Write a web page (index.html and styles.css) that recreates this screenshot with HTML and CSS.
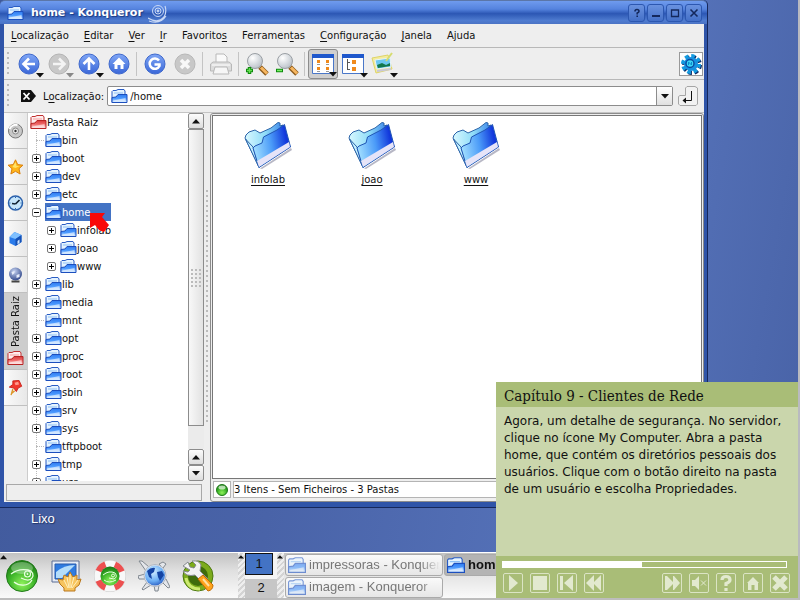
FILE: index.html
```html
<!DOCTYPE html>
<html lang="pt-BR">
<head>
    <meta charset="UTF-8" />
    <meta name="viewport" content="width=device-width, initial-scale=1.0" />
    <title>home - Konqueror</title>
    <link rel="stylesheet" href="styles.css">
</head>
<body>
    <!-- shared icons -->
    <svg class="defs" width="0" height="0" aria-hidden="true">
        <defs>
            <linearGradient id="gFolder" x1="0" y1="0" x2="0" y2="1"><stop offset="0" stop-color="#2f7bf0"/><stop offset="0.5" stop-color="#4d9bff"/><stop offset="1" stop-color="#e6f4ff"/></linearGradient>
            <linearGradient id="gRed" x1="0" y1="0" x2="0" y2="1"><stop offset="0" stop-color="#d83a3a"/><stop offset="0.5" stop-color="#f07070"/><stop offset="1" stop-color="#fff0f0"/></linearGradient>
            <linearGradient id="gBall" x1="0" y1="0" x2="0" y2="1"><stop offset="0" stop-color="#7fa6f5"/><stop offset="1" stop-color="#3a67d8"/></linearGradient>
            <linearGradient id="gBig" x1="0" y1="0.6" x2="1" y2="0.4"><stop offset="0" stop-color="#a5e2ff"/><stop offset="0.5" stop-color="#4b9bf8"/><stop offset="0.9" stop-color="#1238dc"/></linearGradient>
            <linearGradient id="gTab" x1="0" y1="0" x2="1" y2="0"><stop offset="0" stop-color="#d8f8ff"/><stop offset="0.5" stop-color="#8fdcf8"/><stop offset="1" stop-color="#2b74e8"/></linearGradient>
            <radialGradient id="gGreen" cx="0.5" cy="0.75" r="0.7"><stop offset="0" stop-color="#8df05a"/><stop offset="0.6" stop-color="#3cb428"/><stop offset="1" stop-color="#1d7d16"/></radialGradient>
            <radialGradient id="gGlass" cx="0.35" cy="0.3" r="0.8"><stop offset="0" stop-color="#ffffff"/><stop offset="1" stop-color="#b4bcc4"/></radialGradient>
            <radialGradient id="gGlobe" cx="0.4" cy="0.3" r="0.8"><stop offset="0" stop-color="#d5efff"/><stop offset="0.6" stop-color="#6aaef5"/><stop offset="1" stop-color="#1f4fb8"/></radialGradient>
            <radialGradient id="gDark" cx="0.4" cy="0.3" r="0.8"><stop offset="0" stop-color="#c5d2f0"/><stop offset="1" stop-color="#223a80"/></radialGradient>
        </defs>
        <symbol id="folder" viewBox="0 0 16 16">
            <path d="M.5 14.5V3.500L1.500 2.500H4.500L6.500 1.500H12.500L13.500 3V7" fill="#e4f3ff" stroke="#2a5dc4"/>
            <path d="M.5 14.5V9.500L4.500 9L6.500 6.500H15.500V14.500Z" fill="url(#gFolder)" stroke="#1c4fbe"/>
            <path d="M2.500 5H11.500" stroke="#8fc0f5" fill="none"/>
            <path d="M2 12.500L14 10V13.500H2Z" fill="#fff" opacity=".55"/>
        </symbol>
        <symbol id="folder-red" viewBox="0 0 16 16">
            <path d="M.5 14.5V3.500L1.500 2.500H4.500L6.500 1.500H12.500L13.500 3V7" fill="#ffecec" stroke="#c03030"/>
            <path d="M.5 14.5V9.500L4.500 9L6.500 6.500H15.500V14.500Z" fill="url(#gRed)" stroke="#b82424"/>
            <path d="M2.500 5H11.500" stroke="#f3a0a0" fill="none"/>
            <path d="M2 12.500L14 10V13.500H2Z" fill="#fff" opacity=".5"/>
        </symbol>
        <symbol id="folder-big" viewBox="0 0 48 48">
            <path d="M16 47.500L47 27L48 29L18 48Z" fill="#70708c" opacity=".5"/>
            <path d="M1 17L2 14L5 11L11 9L16 12L27 7L34 1.500L36 2V5L39 4L42 24L15 46Z" fill="url(#gTab)" stroke="#2b63a8"/>
            <path d="M1.500 18L15 46.500L9 26Z" fill="#c4f0ff" stroke="#2b63a8"/>
            <path d="M40.500 3.500L46.500 26L15 46.500L9 27L11 25L18 22L19.500 16L33 9Z" fill="url(#gBig)" stroke="#1f55b4"/>
            <path d="M13 40L45 21L46 26L15 46Z" fill="#e6e4f8"/>
        </symbol>
        <symbol id="down" viewBox="0 0 8 5"><path d="M0 0H8L4 4.500Z" fill="currentColor"/></symbol>
        <symbol id="up" viewBox="0 0 8 5"><path d="M0 4.500H8L4 0Z" fill="currentColor"/></symbol>
        <symbol id="gecko" viewBox="0 0 32 32">
            <circle cx="16" cy="16" r="15.500" fill="url(#gGreen)" stroke="#237a1c"/>
            <ellipse cx="16" cy="8" rx="11" ry="6" fill="#fff" opacity=".3"/>
            <path d="M5 14C10 10 17 9 22 10C27 11 28 15 26 18C24 21 19 20 15 18M8 22C13 26 22 27 26 20" fill="none" stroke="#e8ffe0" stroke-width="1.300"/>
            <circle cx="21.500" cy="14" r="3" fill="none" stroke="#e8ffe0" stroke-width="1.200"/>
            <circle cx="21.500" cy="14" r="1" fill="#e8ffe0"/>
        </symbol>
    </svg>

    <main class="desktop">
        <section class="window">
            <header class="titlebar">
                <svg class="ico16"><use href="#folder"/></svg>
                <h1>home - Konqueror</h1>
                <svg class="swirl" viewBox="0 0 20 22" fill="none" stroke="#c9d8f5">
                    <circle cx="10" cy="9" r="5.500"/><circle cx="10" cy="9" r="3"/><circle cx="10" cy="9" r="1" fill="#c9d8f5"/>
                    <path d="M0 16Q10 22 16 15Q19 10 17 4M1 19Q12 23 18 14" stroke-width="1.200"/>
                </svg>
                <div class="winButtons">
                    <button aria-label="Ajuda da janela"><svg viewBox="0 0 10 10"><path d="M3 3.500Q3 1.500 5 1.500T7 3.300Q7 4.300 5.200 5V6.500M5.200 7.500V9" stroke-width="1.600"/></svg></button>
                    <button aria-label="Minimizar"><svg viewBox="0 0 10 10"><path d="M1 8H9" stroke-width="2"/></svg></button>
                    <button aria-label="Maximizar"><svg viewBox="0 0 10 10"><path d="M1.500 2H8.500V8.500H1.500Z" stroke-width="1.300"/></svg></button>
                    <button aria-label="Fechar"><svg viewBox="0 0 10 10"><path d="M1.500 1.500L8.500 8.500M8.500 1.500L1.500 8.500" stroke-width="1.600"/></svg></button>
                </div>
            </header>

            <nav class="menubar">
                <button><u>L</u>ocalização</button>
                <button><u>E</u>ditar</button>
                <button><u>V</u>er</button>
                <button><u>I</u>r</button>
                <button>Favorito<u>s</u></button>
                <button>Ferramen<u>t</u>as</button>
                <button><u>C</u>onfiguração</button>
                <button><u>J</u>anela</button>
                <button>Ajuda</button>
            </nav>

            <div class="toolbar">
                <span class="handle"></span>
                <button aria-label="Voltar"><svg class="ico22" viewBox="0 0 22 22"><circle cx="11" cy="11" r="10" fill="url(#gBall)" stroke="#3f69cc"/><path d="M17 11H6M11 5.500L5.500 11L11 16.500" fill="none" stroke="#fff" stroke-width="2.600"/></svg><svg class="arrow"><use href="#down"/></svg></button>
                <button class="off" aria-label="Avançar"><svg class="ico22" viewBox="0 0 22 22"><circle cx="11" cy="11" r="10" fill="#c8c8c8" stroke="#b4b4b4"/><path d="M5 11H16M11 5.500L16.500 11L11 16.500" fill="none" stroke="#f4f4f4" stroke-width="2.600"/></svg><svg class="arrow"><use href="#down"/></svg></button>
                <button aria-label="Subir"><svg class="ico22" viewBox="0 0 22 22"><circle cx="11" cy="11" r="10" fill="url(#gBall)" stroke="#3f69cc"/><path d="M11 17V6M5.500 11L11 5.500L16.500 11" fill="none" stroke="#fff" stroke-width="2.600"/></svg><svg class="arrow"><use href="#down"/></svg></button>
                <button aria-label="Pasta pessoal"><svg class="ico22" viewBox="0 0 22 22"><circle cx="11" cy="11" r="10" fill="url(#gBall)" stroke="#3f69cc"/><path d="M11 4.500L17.500 11H15.500V16H12.500V12H9.500V16H6.500V11H4.500Z" fill="#fff"/></svg></button>
                <span class="sep"></span>
                <button aria-label="Recarregar"><svg class="ico22" viewBox="0 0 22 22"><circle cx="11" cy="11" r="10" fill="url(#gBall)" stroke="#3f69cc"/><path d="M15 7.500A5.200 5.200 0 1 0 15.500 13V11.500H10.500" fill="none" stroke="#fff" stroke-width="2.500"/></svg></button>
                <button class="off" aria-label="Parar"><svg class="ico22" viewBox="0 0 22 22"><circle cx="11" cy="11" r="10" fill="#c8c8c8" stroke="#b8b8b8"/><path d="M7 7L15 15M15 7L7 15" stroke="#f8f8f8" stroke-width="3.500"/></svg></button>
                <span class="sep"></span>
                <button class="off" aria-label="Imprimir"><svg class="ico24" viewBox="0 0 24 24" stroke="#b8b8b8"><path d="M7 11V2H15L18 5V11" fill="#fafafa"/><path d="M1.500 12L4 10H20L22.500 12V19H1.500Z" fill="#dcdcdc"/><path d="M6 15H18L20 22H4Z" fill="#f6f6f6"/><path d="M3 13H21" stroke="#fff"/></svg></button>
                <span class="sep"></span>
                <button aria-label="Ampliar"><svg class="ico24" viewBox="0 0 24 24"><path d="M15 15L22 22" stroke="#8c5a1c" stroke-width="5"/><path d="M16 15.500L22 21.500" stroke="#f6b660" stroke-width="3"/><circle cx="10" cy="9" r="7.500" fill="url(#gGlass)" stroke="#9a9fa4"/><path d="M4.500 15V22M1 18.500H8" stroke="#0c8a0c" stroke-width="3.500"/><path d="M4.500 16V21M2 18.500H7" stroke="#66e052" stroke-width="1.500"/></svg></button>
                <button aria-label="Reduzir"><svg class="ico24" viewBox="0 0 24 24"><path d="M15 15L22 22" stroke="#8c5a1c" stroke-width="5"/><path d="M16 15.500L22 21.500" stroke="#f6b660" stroke-width="3"/><circle cx="10" cy="9" r="7.500" fill="url(#gGlass)" stroke="#9a9fa4"/><path d="M1 18.500H8" stroke="#0c8a0c" stroke-width="3.500"/><path d="M2 18.500H7" stroke="#7cf068" stroke-width="1.500"/></svg></button>
                <span class="sep"></span>
                <button class="pressed" aria-label="Ver como ícones"><svg class="ico22" viewBox="0 0 22 22"><path d="M.5 1.500H21.500V20.500H.5Z" fill="#fff" stroke="#4a77c8"/><path d="M0 1H22V5H0Z" fill="#1f58cc"/><path d="M5 7H8V10H5ZM14 7H17V10H14ZM5 14H8V17H5ZM14 14H17V17H14Z" fill="#f08a1c"/><path d="M5 11.500H8M14 11.500H17M5 18.500H8M14 18.500H17" stroke="#999"/></svg><svg class="arrow"><use href="#down"/></svg></button>
                <button aria-label="Ver em árvore"><svg class="ico22" viewBox="0 0 22 22"><path d="M.5 1.500H21.500V20.500H.5Z" fill="#fff" stroke="#4a77c8"/><path d="M0 1H22V5H0Z" fill="#1f58cc"/><path d="M10 7H14V11H10ZM10 14H14V18H10Z" fill="#f08a1c"/><path d="M5.500 6V17M5.500 9.500H8M5.500 16.500H8" stroke="#555" fill="none"/></svg><svg class="arrow"><use href="#down"/></svg></button>
                <button aria-label="Ver imagens"><svg class="ico24" viewBox="0 0 24 24"><path d="M1 6L17 3L21 17L5 21Z" fill="#f4ec9c" stroke="#ded468"/><path d="M4 8L19 6L20 15L6 17Z" fill="#6cc8f0" stroke="#e8f4fa"/><path d="M6 13L11 11L15 13L19 11V14L7 16Z" fill="#13784c"/><path d="M6 19L20 17" stroke="#c8c8d8" stroke-width="2"/><path d="M15 9L21 1" stroke="#d6dc70" stroke-width="2"/></svg><svg class="arrow"><use href="#down"/></svg></button>
                <span class="gear"><svg class="ico22" viewBox="0 0 22 22"><circle cx="12" cy="12" r="8" fill="none" stroke="#0b2a66" stroke-width="4" stroke-dasharray="3.600 2.680"/><circle cx="11" cy="11" r="8" fill="none" stroke="#149be0" stroke-width="4" stroke-dasharray="3.600 2.680"/><circle cx="11" cy="11" r="7" fill="#1590e0"/><circle cx="10" cy="10.500" r="4" fill="#3bd6f5" stroke="#0a4aa0" stroke-width="1.500"/><path d="M8.500 12V9L11.500 12V9" stroke="#0a8ad0" fill="none"/></svg></span>
            </div>

            <form class="location">
                <span class="handle"></span>
                <button class="clear" type="reset" aria-label="Limpar"><svg viewBox="0 0 15 12"><path d="M0 0H10L15 6L10 12H0Z" fill="#111"/><path d="M2.500 3L8.500 9.500M8.500 3L2.500 9.500" stroke="#fff" stroke-width="1.800"/></svg></button>
                <label for="url">L<u>o</u>calização:</label>
                <div class="combo">
                    <svg class="ico16"><use href="#folder"/></svg>
                    <input type="text" id="url" value="/home">
                    <button type="button" aria-label="Histórico"><svg class="tri"><use href="#down"/></svg></button>
                </div>
                <button class="go" type="button" aria-label="Ir"><svg viewBox="0 0 20 20"><path d="M.5 18V10.500L2 9.500H7.500V2L9 .5H17L19.500 2V18L18 19.500H2Z" fill="#f2f2f2" stroke="#a6a6a6"/><path d="M13.500 5V14.500H6" fill="none" stroke="#111"/><path d="M8 11.500V17.500L4.500 14.500Z" fill="#111"/></svg></button>
            </form>

            <div class="content">
                <aside class="sidebar">
                    <div class="sideMain">
                        <nav class="tabs">
                            <button aria-label="Dispositivos"><svg class="ico16" viewBox="0 0 16 16"><circle cx="8" cy="8" r="7" fill="#c9c9c9" stroke="#777"/><path d="M2 6A7 7 0 0 1 10 2" stroke="#fff" stroke-width="2" fill="none"/><circle cx="8" cy="8" r="3" fill="#eee" stroke="#888"/><circle cx="8" cy="8" r="1.200" fill="#333"/></svg></button>
                            <button aria-label="Favoritos"><svg class="ico16" viewBox="0 0 16 16"><path d="M8 .8L10.200 5.600L15.400 6.200L11.500 9.700L12.600 15L8 12.300L3.400 15L4.500 9.700L.6 6.200L5.800 5.600Z" fill="#ffb61c" stroke="#d97f0c"/><path d="M8 3L9 7H12L8 9L5 8Z" fill="#ffe36a"/></svg></button>
                            <button aria-label="Histórico"><svg class="ico16" viewBox="0 0 16 16"><circle cx="8" cy="8" r="7" fill="#c6e6fb" stroke="#2b61ac" stroke-width="1.500"/><path d="M8 9L12 5M8 9L4.500 8.500" stroke="#123" stroke-width="1.700"/><path d="M8 2V3M8 13V14M2 8H3M13 8H14" stroke="#2b61ac"/></svg></button>
                            <button aria-label="Pasta pessoal"><svg class="ico16" viewBox="0 0 16 16"><path d="M2 6L7 1L14 4V11L8 15L2 12Z" fill="#2a7bea"/><path d="M2 6L7 1L14 4L8 8Z" fill="#7fc0ff"/><path d="M8 8L14 4V11L8 15Z" fill="#1551b6"/><path d="M10 10L12 8.500V12L10 13.200Z" fill="#cfe6ff"/></svg></button>
                            <button aria-label="Rede"><svg class="ico16" viewBox="0 0 16 16"><circle cx="8" cy="7" r="6.500" fill="url(#gDark)"/><path d="M4 5L7 4L7 6L5 8ZM9 8L12 7L12 10L9 11Z" fill="#e8eefb"/><path d="M4 14.500H12" stroke="#444" stroke-width="2"/></svg></button>
                            <button class="active"><span>Pasta Raiz</span><svg class="ico16"><use href="#folder-red"/></svg></button>
                            <button aria-label="Serviços"><svg class="ico16" viewBox="0 0 16 18"><path d="M5 1L12 .5L15 7L11 9L9 13L6 9L1 8L5 5Z" fill="#f0372c" stroke="#c81e18"/><path d="M7 3L11 2L12 5L8 6Z" fill="#ff9a8c"/><path d="M5 10L3 17M7 12L4 15" stroke="#dc9628" stroke-width="1.500"/></svg></button>
                        </nav>
                        <div class="treePane">
                            <ul class="tree" id="tree"></ul>
                            <div class="scrollbar">
                                <button aria-label="Rolar para cima"><svg class="tri"><use href="#up"/></svg></button>
                                <span class="thumb"><i class="grip"></i></span>
                                <span class="trough"></span>
                                <button aria-label="Rolar para cima"><svg class="tri"><use href="#up"/></svg></button>
                                <button aria-label="Rolar para baixo"><svg class="tri"><use href="#down"/></svg></button>
                            </div>
                        </div>
                    </div>
                    <div class="sideStatus"></div>
                </aside>
                <span class="splitter"></span>
                <section class="view">
                    <div class="files">
                        <a href="#infolab"><svg><use href="#folder-big"/></svg><span>infolab</span></a>
                        <a href="#joao"><svg><use href="#folder-big"/></svg><span>joao</span></a>
                        <a href="#www"><svg><use href="#folder-big"/></svg><span>www</span></a>
                    </div>
                    <footer class="status">
                        <span class="led"><svg viewBox="0 0 12 12"><circle cx="6" cy="6" r="5.500" fill="url(#gGreen)" stroke="#1f7a1a"/><ellipse cx="6" cy="3.500" rx="3.500" ry="2" fill="#fff" opacity=".65"/></svg></span>
                        <span class="statusText">3 Itens - Sem Ficheiros - 3 Pastas</span>
                    </footer>
                </section>
            </div>
        </section>

        <svg class="pointer" viewBox="0 0 20 20"><path d="M0 0H15L12 4L19 12L14 19L9 17L5 12L0 15Z" fill="#f90808"/></svg>
        <span class="trash">Lixo</span>
    </main>

    <footer class="taskbar">
        <div class="launchers">
            <svg class="mini"><use href="#up"/></svg>
            <button aria-label="Menu"><svg><use href="#gecko"/></svg></button>
            <button aria-label="Área de trabalho"><svg viewBox="0 0 32 32"><path d="M2 1H29V22H2Z" fill="#e6ebf5" stroke="#5a6d94"/><path d="M5 4H26V19H5Z" fill="#2f7be0" stroke="#2a5cac"/><path d="M6 18V12Q14 5 25 5L12 18Z" fill="#b4ddfb"/><path d="M14 31V28L10 24L8 19L13 20L14 15L18 17L20 12L23 17L27 15V20L31 19L29 25L25 28V31Z" fill="#f7c45e" stroke="#b9771c"/><path d="M18 28L14 20M19 28L17 17M20 28V14M21 28L24 17M22 28L28 20" stroke="#fff0c0"/></svg></button>
            <button aria-label="Ajuda"><svg viewBox="0 0 32 32"><circle cx="16" cy="16" r="12.500" fill="none" stroke="#c9c9c9" stroke-width="7"/><circle cx="16" cy="16" r="12.500" fill="none" stroke="#f8f8f8" stroke-width="6"/><circle cx="16" cy="16" r="12.500" fill="none" stroke="#ec5050" stroke-width="6" stroke-dasharray="10 9.630" stroke-dashoffset="15"/><circle cx="16" cy="16" r="9.500" fill="url(#gGreen)"/><path d="M9 15Q15 10 21 13Q24 17 20 19L15 18M10 20Q15 24 22 20" fill="none" stroke="#e8ffe0"/><circle cx="19" cy="15.500" r="1.500" fill="none" stroke="#e8ffe0"/></svg></button>
            <button aria-label="Navegador"><svg viewBox="0 0 32 32"><path d="M1 1L4 1L11 7L8 11ZM0 16L7 14V19L1 19ZM4 29L9 22L13 25L5 30ZM16 25H21L20 31H17ZM24 22L28 19L32 27L30 28ZM21 4L25 2L28 4L25 8Z" fill="#e4e6ea" stroke="#808890"/><circle cx="17" cy="15.500" r="11" fill="#e8ebf0" stroke="#b0b6c0"/><circle cx="17" cy="15.500" r="10" fill="url(#gGlobe)"/><path d="M9 11Q13 7 17 8L16 12L13 14L14 19L11 17ZM19 12L24 11L26 15L22 21L20 17Z" fill="#1444a4"/></svg></button>
            <button aria-label="Configurar"><svg viewBox="0 0 32 32"><circle cx="16" cy="16" r="15" fill="#7cab1c" stroke="#4c7810"/><circle cx="16" cy="16" r="10" fill="#3f6c0c"/><path d="M4 18Q6 29 18 29" stroke="#cdea70" stroke-width="3" fill="none"/><path d="M1 6L6 2L8 7L12 8L14 5L10 1Q17 0 19 5L18 11L26 19L21 23L13 15Q4 17 1 11L6 12L8 10Z" fill="#f2f2f2" stroke="#858a8f"/><path d="M16 19L21 15L31 25Q31 30 26 31Z" fill="#ffa31c" stroke="#c26c06"/><path d="M21 19L27 26" stroke="#ffe0a0" stroke-width="2"/></svg></button>
        </div>
        <span class="barHandle"><svg><use href="#up"/></svg></span>
        <div class="pager">
            <button class="current">1</button>
            <button>2</button>
        </div>
        <span class="barHandle"><svg><use href="#up"/></svg></span>
        <div class="tasks">
            <button><svg class="ico18"><use href="#folder"/></svg><span>impressoras - Konqueror</span></button>
            <button class="front"><svg class="ico18"><use href="#folder"/></svg><span>home - Konqueror</span></button>
            <button><svg class="ico18"><use href="#folder"/></svg><span>imagem - Konqueror</span></button>
        </div>
    </footer>

    <article class="lesson">
        <h2>Capítulo 9 - Clientes de Rede</h2>
        <p>Agora, um detalhe de segurança. No servidor, clique no ícone My Computer. Abra a pasta home, que contém os diretórios pessoais dos usuários. Clique com o botão direito na pasta de um usuário e escolha Propriedades.</p>
        <div class="player">
            <div class="progress"><span style="width: 49%"></span></div>
            <div class="controls">
                <button aria-label="Reproduzir"><svg viewBox="0 0 18 18"><path d="M5 1L14 9L5 17Z"/></svg></button>
                <button aria-label="Parar"><svg viewBox="0 0 18 18"><path d="M2 2H16V16H2Z"/></svg></button>
                <button aria-label="Início"><svg viewBox="0 0 18 18"><path d="M2 2H5V16H2ZM15 1V17L6 9Z"/></svg></button>
                <button aria-label="Retroceder"><svg viewBox="0 0 18 18"><path d="M9 1V17L1 9ZM16 1V17L8 9Z"/></svg></button>
                <button class="next" aria-label="Avançar"><svg viewBox="0 0 18 18"><path d="M2 2H4L10 8V2H11L17 9L11 16H10V10L4 16H2Z"/></svg></button>
                <button aria-label="Sem som"><svg viewBox="0 0 18 18"><path d="M2 6H5L9 2V16L5 12H2Z"/><path d="M11 6.500L16 11.500M16 6.500L11 11.500" stroke="#e2e9cf"/></svg></button>
                <button aria-label="Ajuda"><svg viewBox="0 0 18 18"><path d="M5 6Q5 2.500 9 2.500T13 6Q13 8 9 9.500V12M9 14V17" fill="none" stroke="#e2e9cf" stroke-width="3.200"/></svg></button>
                <button aria-label="Início do curso"><svg viewBox="0 0 18 18"><path d="M9 3L15 9H14V16H10.500V11H7.500V16H4V9H3Z"/></svg></button>
                <button aria-label="Fechar"><svg viewBox="0 0 18 18"><path d="M3 3L15 15M15 3L3 15" stroke="#e2e9cf" stroke-width="5"/></svg></button>
            </div>
        </div>
    </article>

    <script>
        // sign: "+" closed, "-" open, "" no children
        const folders = [
            ["bin", ""], ["boot", "+"], ["dev", "+"], ["etc", "+"],
            ["home", "-", ["infolab", "joao", "www"]],
            ["lib", "+"], ["media", "+"], ["mnt", ""], ["opt", "+"], ["proc", "+"],
            ["root", "+"], ["sbin", "+"], ["srv", "+"], ["sys", "+"], ["tftpboot", ""],
            ["tmp", "+"], ["usr", "+"]
        ];

        function row(name, sign, selected){
            let box = sign ? `<svg class="sign" viewBox="0 0 9 9"><rect x=".5" y=".5" width="8" height="8" rx="1.500" fill="#fff" stroke="#777"/><path d="M2 4.500H7${sign === "+" ? "M4.500 2V7" : ""}" stroke="#000"/></svg>` : `<i class="branch"></i>`;
            return `<div class="row">${box}<span class="item${selected ? " selected" : ""}"><svg class="ico16"><use href="#folder"/></svg>${name}</span></div>`;
        }

        document.getElementById("tree").innerHTML =
            `<li><div class="row root"><svg class="ico16"><use href="#folder-red"/></svg>Pasta Raiz</div><ul>` +
            folders.map(([name, sign, kids]) =>
                `<li>${row(name, sign, name === "home")}${kids ? `<ul>${kids.map(k => `<li>${row(k, "+")}</li>`).join("")}</ul>` : ""}</li>`
            ).join("") + `</ul></li>`;
    </script>
</body>
</html>
```

FILE: styles.css
```css
* {
    box-sizing: border-box;
}
body {
    display: flex;
    flex-direction: column;
    height: 100vh;
    margin: 0;
    overflow: hidden;
    border-right: 2px solid #b9bac0;
    border-bottom: 2px solid #bdbdbd;
    font-family: "DejaVu Sans", Verdana, sans-serif;
    font-size: 10px;
    color: #111;
}
button {
    margin: 0;
    padding: 0;
    border: 0;
    background: none;
    font: inherit;
    color: inherit;
}
svg {
    display: block;
    flex: none;
}
u {
    text-underline-offset: 2px;
}
.defs { position: absolute; }
.ico16 { width: 17px; height: 16px; }
.ico18 { width: 18px; height: 18px; }
.ico22 { width: 22px; height: 22px; }
.ico24 { width: 24px; height: 24px; }
.tri { width: 8px; height: 5px; }

/* desktop */
.desktop {
    position: relative;
    flex: 1;
    min-height: 0;
    background: linear-gradient(100deg, #40599b 0%, #4963a8 40%, #5673ba 75%, #4862a6 100%);
}
.trash {
    position: absolute;
    left: 31px;
    bottom: 25px;
    font: 13px/16px "Liberation Sans", Arial, sans-serif;
    color: #fff;
    text-shadow: 1px 1px 1px #223566;
}
.pointer {
    position: absolute;
    left: 90px;
    top: 213px;
    width: 20px;
    height: 20px;
}

/* window */
.window {
    position: absolute;
    inset: 0 90px 44px 0;
    display: flex;
    flex-direction: column;
    padding: 0 3px 5px 4px;
    background: #2f54a8;
    border: solid #16285c;
    border-width: 0 1px 1px 0;
    border-radius: 5px 5px 0 0;
}
.titlebar {
    display: flex;
    align-items: center;
    height: 24px;
    margin: 0 -3px 0 -4px;
    padding: 0 5px 0 7px;
    border-top: 1px solid #5b76a8;
    border-radius: 5px 5px 0 0;
    background: linear-gradient(#6f9bee, #5583de 35%, #2c57b4 55%, #4f7cd0 85%, #4a73c4);
}
.titlebar h1 {
    margin: 0 5px 0 7px;
    font-size: 11px;
    font-weight: bold;
    color: #fff;
    text-shadow: 1px 1px 1px #1c3a80;
}
.swirl { width: 20px; height: 22px; }
.winButtons {
    display: flex;
    gap: 2px;
    margin-left: auto;
}
.winButtons button {
    display: grid;
    place-items: center;
    width: 17px;
    height: 18px;
    border: 1px solid #2c57b0;
    border-radius: 3px;
    background: linear-gradient(#6a92e0, #4470c8);
}
.winButtons svg {
    width: 10px;
    height: 10px;
    fill: none;
    stroke: #14285c;
}

.menubar {
    display: flex;
    gap: 15px;
    height: 24px;
    padding: 0 7px;
    background: #eee;
    border-bottom: 1px solid #b8b8b8;
}
.handle {
    align-self: stretch;
    width: 10px;
    margin: 3px 0;
    background: radial-gradient(circle at 2px 2px, #bbb 1px, transparent 1px) 2px 0 / 4px 5px repeat-y;
}
.toolbar {
    display: flex;
    align-items: center;
    height: 32px;
    background: #eee;
    border-bottom: 1px solid #b8b8b8;
}
.toolbar button {
    position: relative;
    display: grid;
    place-items: center;
    width: 30px;
    height: 30px;
}
.toolbar .pressed {
    border: 1px solid #8c8c8c;
    border-radius: 3px;
    background: #cfcfcf;
}
.arrow {
    position: absolute;
    right: 0;
    bottom: 1px;
    width: 8px;
    height: 5px;
}
.off { color: #888; }
.sep {
    width: 1px;
    height: 24px;
    margin: 0 3px 0 2px;
    background: #c4c4c4;
}
.gear {
    display: grid;
    place-items: center;
    width: 24px;
    height: 24px;
    margin: 0 1px 0 auto;
    border: 1px solid #999;
    background: #fff;
}

.location {
    display: flex;
    align-items: center;
    height: 33px;
    padding-right: 6px;
    background: #eee;
    border-bottom: 1px solid #c4c4c4;
}
.clear {
    margin: 0 7px;
}
.clear svg { width: 15px; height: 12px; }
.combo {
    display: flex;
    align-items: center;
    flex: 1;
    height: 20px;
    margin: 0 5px 0 3px;
    padding-left: 3px;
    border: 1px solid #8c8c8c;
    border-radius: 2px;
    background: #fff;
}
.combo input {
    flex: 1;
    min-width: 0;
    padding: 0 2px;
    border: 0;
    outline: 0;
    font: inherit;
    color: inherit;
}
.combo button {
    display: grid;
    place-items: center;
    align-self: stretch;
    width: 16px;
    border-left: 1px solid #8c8c8c;
    background: linear-gradient(#fff, #e0e0e0);
}
.go svg { width: 20px; height: 20px; }

/* sidebar */
.content {
    display: flex;
    flex: 1;
    min-height: 0;
    background: #eee;
}
.sidebar {
    display: flex;
    flex-direction: column;
    width: 200px;
}
.sideMain {
    display: flex;
    flex: 1;
    min-height: 0;
}
.sideStatus {
    height: 17px;
    margin: 3px 2px 1px;
    border: 1px solid #a8a8a8;
}
.tabs {
    display: flex;
    flex-direction: column;
    width: 24px;
    border-right: 1px solid #ccc;
}
.tabs button {
    display: flex;
    flex-direction: column;
    align-items: center;
    justify-content: center;
    gap: 2px;
    height: 36px;
    border-bottom: 1px solid #c0c0c0;
    background: linear-gradient(90deg, #fafafa, #e8e8e8);
}
.tabs .active {
    height: 77px;
    background: #cdcdcd;
}
.tabs .active span {
    writing-mode: vertical-rl;
    transform: rotate(180deg);
}
.treePane {
    display: flex;
    flex: 1;
    min-width: 0;
    background: #fff;
}
.tree {
    flex: 1;
    overflow: hidden;
}
.tree, .tree ul {
    margin: 0;
    padding: 0;
    list-style: none;
}
.tree ul ul { padding-left: 15px; }
.tree > li > ul {
    background: linear-gradient(#bbb 1px, transparent 1px) 8px 0 / 1px 2px repeat-y;
}
.row {
    display: flex;
    align-items: center;
    height: 18px;
    padding-left: 4px;
}
.root { padding-left: 2px; }
.sign {
    width: 9px;
    height: 9px;
    margin-right: 4px;
}
.branch {
    width: 8px;
    margin: 0 1px 0 4px;
    border-top: 1px dotted #bbb;
}
.item {
    display: flex;
    align-items: center;
    height: 18px;
}
.selected {
    width: 66px;
    background: #4373c4;
    color: #fff;
}

.scrollbar {
    display: flex;
    flex-direction: column;
    width: 16px;
}
.scrollbar button {
    display: grid;
    place-items: center;
    height: 16px;
    border: 1px solid #8c8c8c;
    border-radius: 2px;
    background: linear-gradient(#fcfcfc, #ddd);
}
.thumb {
    display: grid;
    place-items: center;
    flex: 13;
    border: 1px solid #8c8c8c;
    background: linear-gradient(90deg, #f8f8f8, #e2e2e2);
}
.grip {
    width: 12px;
    height: 20px;
    background: radial-gradient(circle at 2px 2px, #bbb 1px, transparent 1px) 0 0 / 4px 4px;
}
.trough {
    flex: 1;
    background: #ebebeb;
}
.splitter {
    width: 6px;
    margin: 76px 0 80px;
    background: radial-gradient(circle at 2px 2px, #bbb 1px, transparent 1px) 1px 0 / 4px 5px repeat-y;
}

/* icon view */
.view {
    display: flex;
    flex-direction: column;
    flex: 1;
    min-width: 0;
    padding: 1px;
    border: 1px solid #8c8c8c;
    border-radius: 3px;
}
.files {
    display: flex;
    align-items: flex-start;
    flex: 1;
    padding: 5px 3px;
    border: 1px solid #777;
    background: #fff;
}
.files a {
    display: flex;
    flex-direction: column;
    align-items: center;
    gap: 5px;
    width: 104px;
    color: inherit;
    text-underline-offset: 2px;
}
.files svg { width: 48px; height: 48px; }
.status {
    display: flex;
    gap: 2px;
    height: 21px;
    padding: 2px 1px;
}
.status span {
    display: flex;
    align-items: center;
    border: 1px solid #b4b4b4;
    background: #fff;
}
.status .led { padding: 0 2px; }
.led svg { width: 12px; height: 12px; }
.status .statusText { flex: 1; }

/* taskbar */
.taskbar {
    display: flex;
    height: 46px;
    border-top: 1px solid #fff;
    background: linear-gradient(#c2c2c2, #e0e0e0 40%, #fafafa);
}
.launchers {
    position: relative;
    display: flex;
    align-items: center;
    gap: 12px;
    width: 238px;
    padding-left: 6px;
}
.launchers button svg { width: 32px; height: 32px; }
.mini {
    position: absolute;
    left: 0;
    top: 2px;
    width: 7px;
    height: 5px;
}
.barHandle {
    width: 7px;
    padding-top: 2px;
    background: repeating-linear-gradient(135deg, #eee 0 2px, #d4d4d4 2px 4px);
}
.barHandle svg { width: 6px; height: 4px; }
.pager {
    display: flex;
    flex-direction: column;
    gap: 4px;
    width: 32px;
    background: #f4f4f4;
    font: 13px/16px "Liberation Sans", Arial, sans-serif;
}
.pager button {
    flex: 1;
    background: #c6c6c6;
}
.pager .current {
    width: 28px;
    border: 1px solid #111;
    background: #4373c4;
}
.tasks {
    display: grid;
    grid-template-columns: 158px 158px;
    grid-template-rows: 1fr 1fr;
    gap: 1px;
    padding: 1px 0 0 1px;
    font: 13px/16px "Liberation Sans", Arial, sans-serif;
}
.tasks button {
    display: flex;
    align-items: center;
    gap: 3px;
    padding: 0 2px;
    overflow: hidden;
    border: 1px solid #aaa;
    border-radius: 3px;
    background: linear-gradient(#fafafa, #e6e6e6);
    color: #777;
    white-space: nowrap;
}
.tasks span {
    flex: 1;
    overflow: hidden;
    text-align: left;
    mask-image: linear-gradient(90deg, #000 85%, transparent);
}
.tasks svg { opacity: 0.6; }
.tasks .front {
    background: #b4b4b4;
    color: #111;
    font-weight: bold;
}
.tasks .front svg { opacity: 1; }

/* lesson panel */
.lesson {
    position: fixed;
    right: 2px;
    bottom: 2px;
    display: flex;
    flex-direction: column;
    width: 302px;
    min-height: 216px;
    background: #cad6ac;
}
.lesson h2 {
    margin: 0;
    padding: 4px 8px 1px;
    background: #a9bd77;
    font: 15px/20px "DejaVu Serif Condensed", "DejaVu Serif", serif;
}
.lesson p {
    flex: 1;
    margin: 0;
    padding: 6px 8px;
    font-size: 12px;
    line-height: 17px;
    color: #111;
}
.player {
    padding: 5px 6px;
    background: #a9bd77;
}
.progress {
    height: 7px;
    margin-right: 5px;
    border: 1px solid #fff;
}
.progress span {
    display: block;
    height: 100%;
    background: #fff;
}
.controls {
    display: flex;
    gap: 7px;
    padding: 5px 2px 0 1px;
}
.controls button {
    width: 20px;
    height: 20px;
    border: 1px solid #dbe4c4;
    border-radius: 2px;
}
.controls svg {
    width: 18px;
    height: 18px;
    fill: #e2e9cf;
}
.controls .next { margin-left: auto; }
```
